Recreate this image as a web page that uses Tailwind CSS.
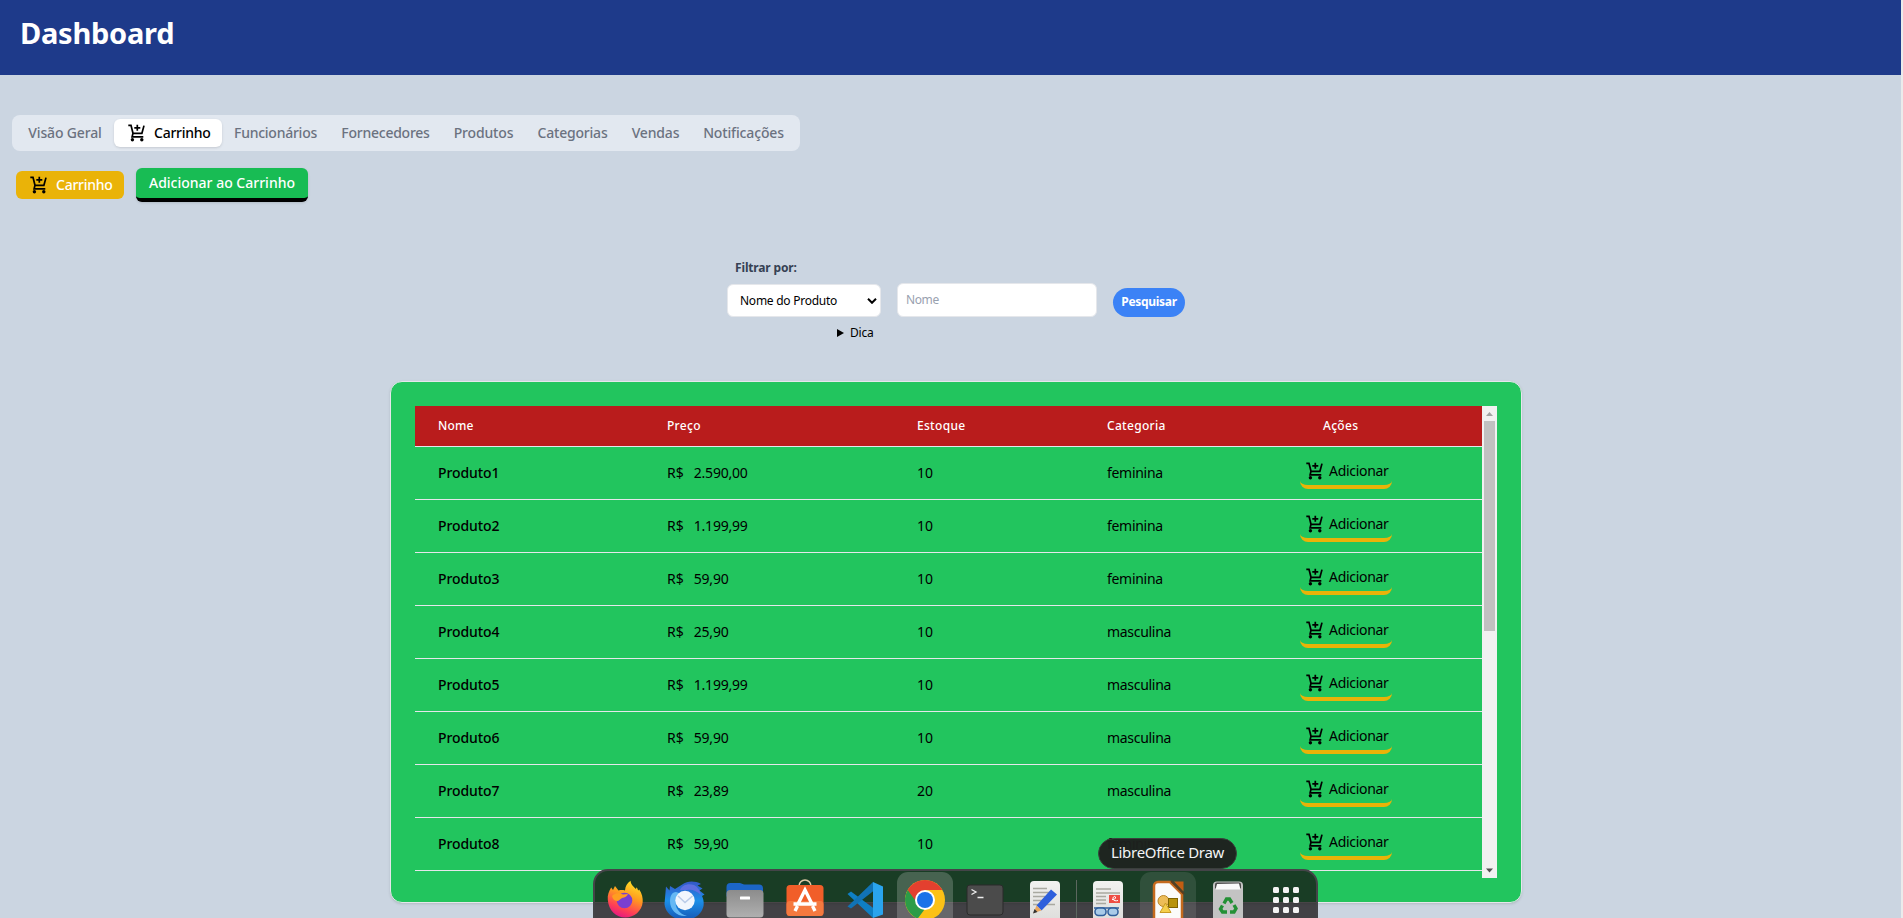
<!DOCTYPE html>
<html lang="pt-BR">
<head>
<meta charset="utf-8">
<title>Dashboard</title>
<script src="https://cdn.jsdelivr.net/npm/@tailwindcss/browser@4"></script>
</head>
<body class="relative h-[918px] overflow-hidden bg-[#ebebeb] font-['Noto_Sans',sans-serif] text-sm text-black">
<svg class="hidden">
  <symbol id="cart" viewBox="0 0 20 20"><path d="M1.300 2.300H4L6 10.300H14.900L17 2.600M6 10.300L5.100 13.900H16.300M10.300 1.800v6M7.300 4.800h6" fill="none" stroke="black" stroke-width="1.700"/><circle cx="5.400" cy="16.800" r="1.700"/><circle cx="14.800" cy="16.800" r="1.700"/></symbol>
</svg>

<div class="h-[918px] w-[1901px] bg-[#cbd5e1]">
  <header class="h-[75px] bg-[#1e3a8a] pt-[13px] pl-[20px]">
    <h1 class="text-[29px] leading-[40px] font-bold tracking-[-0.25px] text-white">Dashboard</h1>
  </header>

  <nav class="mt-10 ml-3 flex h-9 w-[788px] items-center rounded-lg bg-[#e2e8f0] pl-1 font-medium tracking-[-0.15px] text-[#6b7280]">
    <div class="w-[98px] text-center">Visão Geral</div>
    <div class="flex h-7 w-[108px] items-center rounded-md bg-white pl-[13px] text-black shadow-sm"><svg class="mr-[7px] size-5"><use href="#cart"/></svg><span class="tracking-[-0.25px]">Carrinho</span></div>
    <div class="w-[107px] text-center tracking-[-0.25px]">Funcionários</div>
    <div class="w-[113px] text-center tracking-[-0.25px]">Fornecedores</div>
    <div class="w-[84px] pr-px text-center">Produtos</div>
    <div class="w-[94px] pr-px text-center tracking-[-0.2px]">Categorias</div>
    <div class="w-[71px] text-center">Vendas</div>
    <div class="w-[105px] text-center">Notificações</div>
  </nav>

  <div class="mt-[17px] ml-4 flex gap-3 font-medium text-white">
    <button class="mt-[3px] flex h-7 w-[108px] items-center rounded-md bg-[#eab308] pl-[13px]"><svg class="mr-[7px] size-5"><use href="#cart"/></svg><span class="tracking-[-0.25px]">Carrinho</span></button>
    <button class="flex h-[34px] w-[172px] items-center justify-center rounded-md border-b-4 border-black bg-[#18bc54] shadow-sm">Adicionar ao Carrinho</button>
  </div>

  <section class="ml-[727px] pt-[57px] text-xs">
    <label class="block h-[18px] pl-[8px] leading-[18px] font-bold tracking-[-0.15px] text-gray-700">Filtrar por:</label>
    <div class="mt-[6px] flex h-[34px] items-end">
      <div class="flex h-[33px] w-[154px] items-center justify-between rounded-md border border-gray-200 bg-white pr-[3px] pl-3">
        <span class="tracking-[-0.25px]">Nome do Produto</span>
        <svg class="h-[6px] w-[10px]" viewBox="0 0 10 6" fill="none" stroke="black" stroke-width="2"><path d="M1 .8l4 4 4-4"/></svg>
      </div>
      <div class="ml-4 flex h-[34px] w-[200px] items-center rounded-md border border-gray-200 bg-white pl-2 tracking-[-0.4px] text-gray-400">Nome</div>
      <button class="ml-4 h-[29px] w-[72px] rounded-full bg-[#3b82f6] pb-[2px] font-bold tracking-[-0.3px] text-white">Pesquisar</button>
    </div>
    <div class="mt-[7px] flex h-[18px] items-center gap-[6px] pl-[110px]"><svg class="h-2 w-[7px]" viewBox="0 0 7 8"><path d="M0 0l7 4-7 4z"/></svg><span class="tracking-[-0.2px]">Dica</span></div>
  </section>

  <section class="mt-[39px] ml-[390px] flex h-[522px] w-[1132px] rounded-xl border border-gray-200 bg-[#22c55e] pt-[24px] pl-6 shadow-sm">
    <table class="h-[465px] w-[1067px] table-fixed border-collapse">
      <colgroup><col class="w-[228px]"><col class="w-[251px]"><col class="w-[190px]"><col class="w-[192px]"><col class="w-[206px]"></colgroup>
      <thead>
        <tr class="h-[40px] border-b border-gray-200 bg-[#b91c1c] text-left text-xs tracking-[0.3px] text-white">
          <th class="pl-[23px] font-medium tracking-[0.15px]">Nome</th><th class="pl-6 font-medium">Preço</th><th class="pl-[23px] font-medium">Estoque</th><th class="pl-[23px] font-medium">Categoria</th><th class="pl-[47px] font-medium">Ações</th>
        </tr>
      </thead>
      <tbody id="rows"></tbody>
    </table>
    <div class="flex h-[472px] w-[15px] flex-col items-center bg-[#f1f1f1]">
      <svg class="h-[15px] w-[15px] shrink-0" viewBox="0 0 15 15"><path d="M7.500 6l3.500 4h-7z" fill="#a3a3a3"/></svg>
      <div class="h-[210px] w-[11px] bg-[#c1c1c1]"></div>
      <svg class="mt-auto h-[15px] w-[15px] shrink-0" viewBox="0 0 15 15"><path d="M4 5.500h7l-3.500 4z" fill="#505050"/></svg>
    </div>
  </section>
</div>

<!-- Desktop dock and its tooltip float above the page -->
<div class="absolute top-[838px] left-[1098px] z-10 flex h-[31px] w-[139px] items-center justify-center rounded-full border border-[#3a3f3c] bg-[#1e201e]/97 pb-px text-[15px] tracking-[-0.3px] text-gray-100">LibreOffice Draw</div>
<div class="absolute top-[869px] left-[593px] flex h-[80px] w-[725px] rounded-t-[15px] border-2 border-[#444448] bg-[#171314]/76 pl-[1px]">
  <svg class="h-[49px] w-[720px]" viewBox="596 871 720 49">
    <defs>
      <linearGradient id="ff" x1=".7" y1="0" x2=".3" y2="1"><stop offset="0" stop-color="#ffe226"/><stop offset=".4" stop-color="#ff9a1f"/><stop offset=".75" stop-color="#ff4055"/><stop offset="1" stop-color="#e31587"/></linearGradient>
      <linearGradient id="tb" x1="0" y1="0" x2="0" y2="1"><stop offset="0" stop-color="#3557c8"/><stop offset=".5" stop-color="#1c8fe8"/><stop offset="1" stop-color="#1558b5"/></linearGradient>
      <linearGradient id="fo" x1="0" y1="0" x2="0" y2="1"><stop offset="0" stop-color="#8c8c8c"/><stop offset="1" stop-color="#b0b0b0"/></linearGradient>
      <linearGradient id="pg" x1="0" y1="0" x2="0" y2="1"><stop offset="0" stop-color="#f2f2f0"/><stop offset="1" stop-color="#dcdcda"/></linearGradient>
    </defs>
    <rect x="897" y="872" width="56" height="56" rx="11" fill="#fff" fill-opacity=".2"/>
    <rect x="1140" y="872" width="56" height="56" rx="11" fill="#fff" fill-opacity=".1"/>
    <!-- Firefox -->
    <path d="M607.800 900c-.6-5 1.200-9 3.400-12.500l1.800 2.500 2-4 3.500 4.500c2.500-.6 4.500-.5 6.500 0 .3-4 2-7.500 5.500-9.700.5 4.200 3 5.700 5.300 8.200l1-1.800 1.400 3.300 1-1c2.800 4 3.800 8.500 3.500 12.500-.7 9-8.500 15.500-17.500 15.500s-16.500-7-17.400-17.500z" fill="url(#ff)"/>
    <circle cx="624.500" cy="900.500" r="7.800" fill="#7a3fd0"/>
    <path d="M612 896c3-3 7-3.500 11-1.500l5-.5c-1 2.500-3 3.500-6 4l-4 3c-3.500 0-5.500-2-6-5z" fill="#ff9e20"/>
    <!-- Thunderbird -->
    <path d="M666 886.500l3.500 4 .5-4.500 5 3 8-5c4-3 12-3.500 18 0l-3.500 1.500 5 3-3 2 5 4-2.500 1.500c1.500 3 2 6 1.500 10-2 9-10 14-19 14-11 0-19-7-20-16z" fill="url(#tb)"/>
    <path d="M670 901c0-5 2-9 6-9l6 2c-7 2-8 11-4 16 2 3 5 5 9 6-10 1-17-6-17-15z" fill="#65b8f4"/>
    <path d="M680 890c2-5 8-7 14-5 4 2 6 6 7 10-4-4-9-6-14-5z" fill="#5d6fe0"/>
    <circle cx="685" cy="900.500" r="9.700" fill="#f1f6fd"/>
    <path d="M678 896l7 6.500 7.500-6.500" fill="none" stroke="#b9cbe8" stroke-width="1.500"/>
    <!-- Files -->
    <path d="M726.500 887a4 4 0 0 1 4-4h9c2 0 3 1.500 5 1.500h14.500a4 4 0 0 1 4 4v8h-36.500z" fill="#1c66c7"/>
    <rect x="726.500" y="890" width="37" height="27.500" rx="3.500" fill="url(#fo)"/><rect x="740" y="896.500" width="10" height="3" rx=".5" fill="#fff"/>
    <!-- App Center -->
    <path d="M799 888v-2a6 6 0 0 1 12 0v2" fill="none" stroke="#dfc9a5" stroke-width="1.600"/>
    <rect x="786.500" y="885" width="37" height="31" rx="3.500" fill="#f15e29"/><rect x="786.500" y="901" width="37" height="15" rx="3.500" fill="#f5793f"/>
    <path d="M798.500 903l6.500-13 6.500 13M793.500 904h23M797.500 906l-2.500 5M812.500 906l2.500 5" fill="none" stroke="#fff" stroke-width="3.400"/>
    <!-- VS Code -->
    <path d="M847.500 894l3.500-2.500L876 910l-3 8z" fill="#0f7fc4"/><path d="M847.500 906.500l3.500 2L876 889l-3-7z" fill="#1173b5"/><path d="M873 882l10 4.500v28L873 918z" fill="#2aa4ee"/>
    <!-- Chrome -->
    <circle cx="925" cy="900" r="20" fill="#fbc116"/>
    <path d="M925 900L907.700 890a20 20 0 0 0 10 28.600l9-12z" fill="#2c9c47"/>
    <path d="M907.700 890a20 20 0 0 1 34.600 0H925v10h-10z" fill="#e3402f"/>
    <circle cx="925" cy="900" r="10" fill="#fff"/><circle cx="925" cy="900" r="8" fill="#1b72e8"/>
    <!-- Terminal -->
    <rect x="967" y="885" width="36" height="30" rx="3" fill="#4b4b4b" stroke="#2b2b2b"/>
    <path d="M971.500 889.500l4.500 2.500-4.500 2.500M977.500 897.500h6" fill="none" stroke="#eee" stroke-width="1.300"/>
    <!-- Text editor -->
    <rect x="1030" y="881" width="30" height="42" rx="4" fill="url(#pg)"/>
    <path d="M1033 888.500h14M1033 892.500h19M1033 896.500h12M1033 900.500h10M1033 904.500h22" stroke="#a9a9a0" stroke-width="1.300"/>
    <path d="M1051 889.500l6 5-15.500 16-5-5z" fill="#2e5fdc"/><path d="M1036.500 905.500l5 5-8 2.500z" fill="#e9a760"/><path d="M1034.500 909l3 3-4.500 1.500z" fill="#333"/>
    <path d="M1076.500 880v40" stroke="#5c675f"/>
    <!-- Document viewer -->
    <rect x="1093" y="881" width="30" height="42" rx="4" fill="url(#pg)"/>
    <path d="M1096 889h15M1096 893h24M1096 896.500h10M1096 900h10M1096 903.500h10" stroke="#a9a9a0" stroke-width="1.300"/>
    <rect x="1109" y="895" width="11" height="8" fill="#ef4d43"/><path d="M1112 899.500c2 .5 4-1 3.500-2.500s-3 0-2.500 2 3 2 5 1.500" fill="none" stroke="#fff"/>
    <path d="M1094 908h25" fill="none" stroke="#2f5f9c" stroke-width="1.500"/><rect x="1095" y="908" width="11" height="7.500" rx="3.500" fill="#a9cbe8" stroke="#2f5f9c" stroke-width="1.500"/><rect x="1108" y="908" width="10" height="7.500" rx="3.500" fill="#a9cbe8" stroke="#2f5f9c" stroke-width="1.500"/>
    <!-- LibreOffice Draw -->
    <path d="M1154 886a4 4 0 0 1 4-4h12l12 12v30h-28z" fill="#fbfbf9" stroke="#c56a1d" stroke-width="2.500"/><path d="M1174 881.500h9.500v10z" fill="#c25d12"/><path d="M1171 881l13 13" stroke="#5b3d20" stroke-width="1.800"/>
    <circle cx="1163.500" cy="901" r="5.500" fill="#edbd58" stroke="#ba8628"/><rect x="1168.500" y="898.500" width="9" height="9" fill="#b8930c" stroke="#7f6300"/><path d="M1165.500 903l5.500 9.500h-11z" fill="#f5cf4b" stroke="#c99b24"/>
    <!-- Trash -->
    <rect x="1213" y="881.500" width="30" height="42" rx="4" fill="#c3c3c3"/><path d="M1215 884.500a2 2 0 0 1 2-2h22a2 2 0 0 1 2 2v4h-26z" fill="#4a4a4a"/><path d="M1217 884l22-.5 1.500 6h-25z" fill="#fafafa"/>
    <g fill="none" stroke="#239035" stroke-width="3.400"><path d="M1224 903.500l2.500-4.500h3l2.500 4"/><path d="M1234 905l2 3.500-2 3.500h-4"/><path d="M1227 912h-4.500l-2-3 2-3.500"/></g>
    <!-- App grid -->
    <g fill="#f3f3f3"><rect x="1273" y="887" width="6" height="6" rx="1.500"/><rect x="1283" y="887" width="6" height="6" rx="1.500"/><rect x="1293" y="887" width="6" height="6" rx="1.500"/><rect x="1273" y="897" width="6" height="6" rx="1.500"/><rect x="1283" y="897" width="6" height="6" rx="1.500"/><rect x="1293" y="897" width="6" height="6" rx="1.500"/><rect x="1273" y="907" width="6" height="6" rx="1.500"/><rect x="1283" y="907" width="6" height="6" rx="1.500"/><rect x="1293" y="907" width="6" height="6" rx="1.500"/></g>
  </svg>
</div>

<script>
const products = [
  ["Produto1", "2.590,00", 10, "feminina"],
  ["Produto2", "1.199,99", 10, "feminina"],
  ["Produto3", "59,90", 10, "feminina"],
  ["Produto4", "25,90", 10, "masculina"],
  ["Produto5", "1.199,99", 10, "masculina"],
  ["Produto6", "59,90", 10, "masculina"],
  ["Produto7", "23,89", 20, "masculina"],
  ["Produto8", "59,90", 10, "feminina"],
];
document.getElementById("rows").innerHTML = products.map(([name, price, stock, category]) => `
  <tr class="h-[53px] border-b border-gray-200">
    <td class="pl-[23px] font-medium tracking-[-0.1px]">${name}</td>
    <td class="pl-6"><span class="mr-[10px]">R$</span><span class="tracking-[-0.2px]">${price}</span></td>
    <td class="pl-[23px]">${stock}</td>
    <td class="pl-[23px] tracking-[-0.3px]">${category}</td>
    <td class="pl-6 align-top"><div class="mt-[10px] flex h-[32px] w-[92px] items-center rounded-lg border-b-4 border-[#eab308] pl-[5px]"><svg class="mr-[4px] size-5 shrink-0"><use href="#cart"/></svg><span class="tracking-[-0.3px]">Adicionar</span></div></td>
  </tr>`).join("");
</script>
</body>
</html>
